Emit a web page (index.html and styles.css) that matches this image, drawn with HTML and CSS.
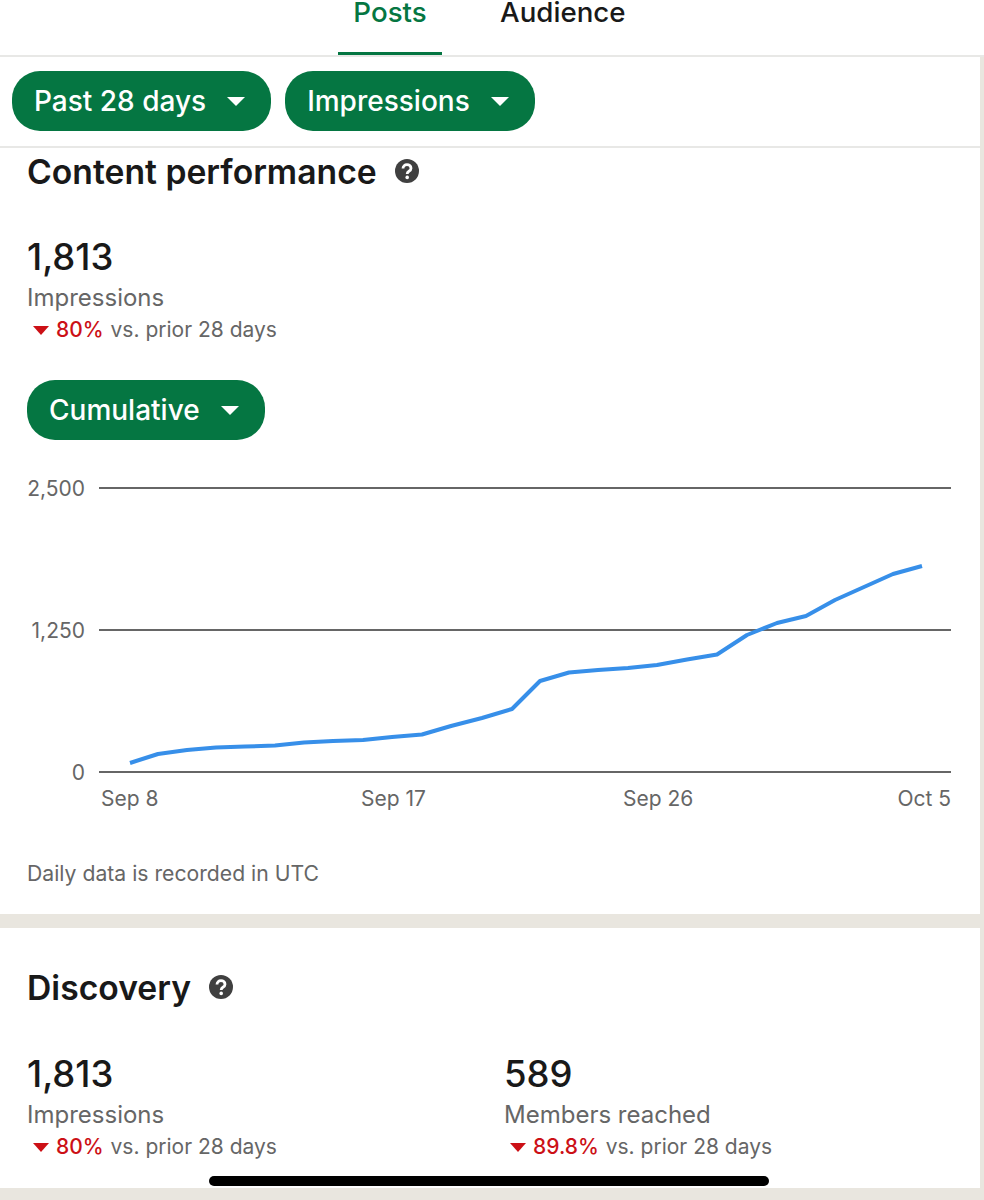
FILE: index.html
```html
<!DOCTYPE html>
<html lang="en-US">
  <head>
    <meta charset="UTF-8">
    <meta name="viewport" content="width=device-width, initial-scale=1">
    <title>Analytics</title>
    <link rel="stylesheet" href="styles.css">
  </head>
  <body>
    <!-- Tabs -->
    <nav class="tabs">
      <a class="tab tab-active">Posts</a>
      <a class="tab">Audience</a>
    </nav>

    <div class="card">
      <!-- Filters -->
      <div class="filters">
        <button class="pill">Past 28 days <span class="caret"></span></button>
        <button class="pill">Impressions <span class="caret"></span></button>
      </div>

      <section class="content">
        <h2 class="title">Content performance
          <svg class="help" viewBox="0 0 24 24"><circle cx="12" cy="12" r="12" fill="#404040"/><path d="M8 9.6c0-2.4 1.8-3.9 4-3.9s4 1.4 4 3.5c0 1.6-.9 2.4-2.1 3.1-1.1.7-1.7 1.3-1.7 2.6" fill="none" stroke="#fff" stroke-width="2.8"/><circle cx="12.2" cy="18.4" r="1.8" fill="#fff"/></svg>
        </h2>

        <div class="stat stat-first">
          <div class="stat-value">1,813</div>
          <div class="stat-label">Impressions</div>
          <div class="stat-delta"><span class="down"></span><b>80%</b> vs. prior 28 days</div>
        </div>

        <button class="pill pill-cumulative">Cumulative <span class="caret"></span></button>

        <!-- Chart, viewBox is in page coordinates -->
        <svg class="chart" viewBox="27 470 930 345">
          <line class="grid" x1="99" y1="488" x2="951" y2="488"/>
          <line class="grid" x1="99" y1="630" x2="951" y2="630"/>
          <line class="grid" x1="99" y1="772" x2="951" y2="772"/>
          <text class="axis" x="85" y="496" text-anchor="end">2,500</text>
          <text class="axis" x="85" y="638" text-anchor="end">1,250</text>
          <text class="axis" x="85" y="780" text-anchor="end">0</text>
          <text class="axis" x="101" y="806">Sep 8</text>
          <text class="axis" x="361" y="806">Sep 17</text>
          <text class="axis" x="623" y="806">Sep 26</text>
          <text class="axis" x="951" y="806" text-anchor="end">Oct 5</text>
          <polyline class="series" points="130,763 158,754 187,750 216,747.5 245,746.5 275,745.5 304,742.5 333,741 363,740 392,737 422,734.5 451,726 482,718 512,709 540,681 569,672.5 598,670 628,668 657,665 687,659.5 717,654.5 747,635 777,623 806,616 835,600 864,587 893,574 922,566"/>
        </svg>

        <p class="note">Daily data is recorded in UTC</p>
      </section>
    </div>

    <div class="card card-discovery">
      <section class="content">
        <h2 class="title">Discovery
          <svg class="help" viewBox="0 0 24 24"><circle cx="12" cy="12" r="12" fill="#404040"/><path d="M8 9.6c0-2.4 1.8-3.9 4-3.9s4 1.4 4 3.5c0 1.6-.9 2.4-2.1 3.1-1.1.7-1.7 1.3-1.7 2.6" fill="none" stroke="#fff" stroke-width="2.8"/><circle cx="12.2" cy="18.4" r="1.8" fill="#fff"/></svg>
        </h2>
        <div class="stat-row">
          <div class="stat">
            <div class="stat-value">1,813</div>
            <div class="stat-label">Impressions</div>
            <div class="stat-delta"><span class="down"></span><b>80%</b> vs. prior 28 days</div>
          </div>
          <div class="stat">
            <div class="stat-value">589</div>
            <div class="stat-label">Members reached</div>
            <div class="stat-delta"><span class="down"></span><b>89.8%</b> vs. prior 28 days</div>
          </div>
        </div>
      </section>
    </div>

    <div class="home-bar"></div>
  </body>
</html>
```

FILE: styles.css
```css
/* Page */
body {
    margin: 0;
    height: 1200px;
    overflow: hidden;
    position: relative;
    background: #e9e6df;
    color: #191919;
    font-family: "Inter", "Liberation Sans", sans-serif;
}

/* Tabs */
.tabs {
    display: flex;
    height: 55px;
    padding-left: 338px;
    background: #fff;
    border-bottom: 2px solid #e8e8e6;
}

.tab {
    box-sizing: border-box;
    height: 55px;
    line-height: 25px;
    font-size: 27.7px;
    font-weight: 500;
    text-align: center;
}

.tab:first-child {
    width: 104px;
    margin-right: 58px;
}

.tab-active {
    color: #057642;
    border-bottom: 3px solid #057642;
}

/* Cards */
.card {
    width: 980px;
    background: #fff;
}

.card-discovery {
    margin-top: 14px;
    height: 260px;
}

/* Filters */
.filters {
    display: flex;
    gap: 14px;
    padding: 14px 12px 15px;
    border-bottom: 2px solid #e8e8e6;
}

.pill {
    display: inline-flex;
    align-items: center;
    gap: 21px;
    height: 60px;
    padding: 0 26px 0 22px;
    border: none;
    border-radius: 28px;
    background: #057642;
    color: #fff;
    font-family: inherit;
    font-size: 28px;
    font-weight: 500;
}

.caret {
    width: 0;
    height: 0;
    border-left: 9px solid transparent;
    border-right: 9px solid transparent;
    border-top: 9px solid #fff;
}

.pill-cumulative {
    display: flex;
    margin-top: 37px;
}

/* Content */
.content {
    padding: 0 0 0 27px;
}

.title {
    display: flex;
    align-items: center;
    gap: 18px;
    margin: 0;
    height: 46px;
    font-size: 33.7px;
    font-weight: 600;
}

.help {
    width: 24px;
    height: 24px;
}

.card-discovery .title {
    padding-top: 36px;
}

.stat-first {
    margin-top: 42px;
}

.stat-value {
    font-size: 36.5px;
    font-weight: 500;
    line-height: 42px;
}

.stat-label {
    margin-top: 5px;
    font-size: 24px;
    line-height: 30px;
    color: #666;
}

.stat-delta {
    display: flex;
    align-items: center;
    margin-top: 4px;
    font-size: 21px;
    line-height: 26px;
    color: #666;
    white-space: pre;
}

.stat-delta b {
    color: #cc1016;
    font-weight: 500;
    margin-right: 1px;
}

.down {
    width: 0;
    height: 0;
    margin: 0 7px 0 6px;
    border-left: 8px solid transparent;
    border-right: 8px solid transparent;
    border-top: 9px solid #cc1016;
}

.stat-row {
    display: grid;
    grid-template-columns: 477px 1fr;
    margin-top: 43px;
}

/* Chart */
.chart {
    display: block;
    width: 930px;
    height: 345px;
    margin-top: 30px;
}

.grid {
    stroke: #666;
    stroke-width: 2;
}

.axis {
    fill: #666;
    font-size: 21px;
}

.series {
    fill: none;
    stroke: #378fe9;
    stroke-width: 4;
    stroke-linejoin: round;
}

.note {
    margin: 45px 0 0;
    padding-bottom: 28px;
    font-size: 21.2px;
    line-height: 26px;
    color: #666;
}

/* iOS home indicator */
.home-bar {
    position: absolute;
    left: 209px;
    top: 1176px;
    width: 560px;
    height: 10px;
    border-radius: 5px;
    background: #000;
}
```
